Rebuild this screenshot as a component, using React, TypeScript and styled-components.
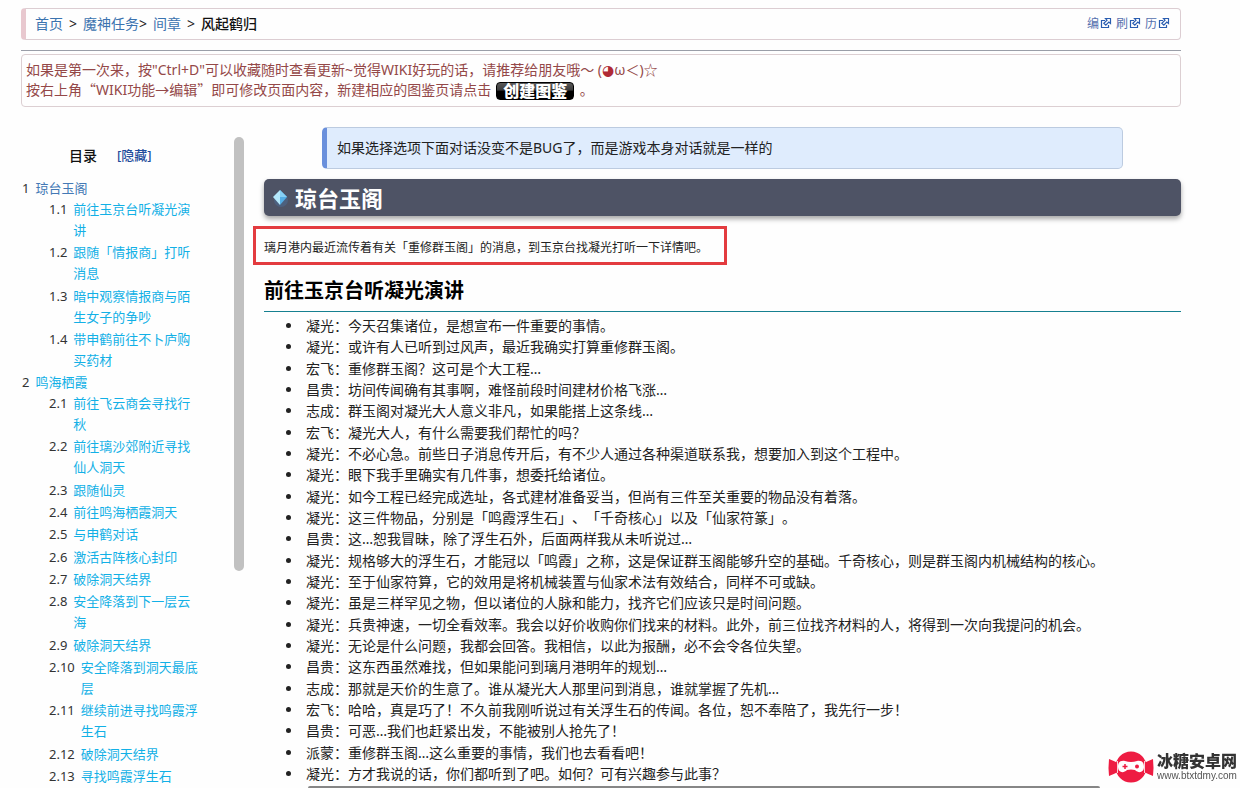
import React from "react";
import styled, { createGlobalStyle, css } from "styled-components";

const sans = `"Noto Sans", "Noto Sans CJK SC", sans-serif`;

const GlobalStyle = createGlobalStyle`
  *, *::before, *::after { box-sizing: border-box; }
  body {
    margin: 0;
    background: #fefefe;
    color: #222;
    font-family: ${sans};
    font-size: 14px;
    line-height: 21px;
    text-spacing-trim: space-all;
  }
  a { color: #3b73af; text-decoration: none; }
`;

const Page = styled.div`
  padding: 8px 59px 0 21px;
`;

const Breadcrumb = styled.nav`
  display: flex;
  align-items: center;
  justify-content: space-between;
  height: 32px;
  padding: 0 10px 2px 9px;
  border: 1px solid #dccdd2;
  border-left: 5px solid #e8c8cf;
  border-radius: 4px;
`;

const Trail = styled.div`
  display: flex;
  gap: 6px;
`;

const Current = styled.strong`
  color: #111;
  font-weight: 500;
`;

const Actions = styled.div`
  display: flex;
  gap: 4px;
  font-size: 12px;
  a {
    display: flex;
    align-items: center;
    gap: 1px;
    color: #5570ae;
  }
`;

const Rule = styled.hr`
  margin: 10px 0 3px;
  border: 0;
  border-top: 1px solid #9a9ea8;
`;

const Notice = styled.section`
  padding: 5px 4px 6px;
  border: 1px solid #dccfd2;
  border-radius: 4px;
  color: #944848;
  line-height: 20px;
  p { margin: 0; }
`;

const Cjk = styled.span`
  font-family: "Noto Sans CJK SC", sans-serif;
  line-height: 1;
`;

const Face = styled.span`
  font-family: "DejaVu Sans", sans-serif;
  line-height: 1;
  color: #b02a35;
`;

const CreateButton = styled.button`
  height: 18px;
  margin: 2px 2px 0 5px;
  padding: 0 6px 2px;
  border: 1px solid #000;
  border-radius: 4px;
  background: linear-gradient(#5a5a5a 0, #3a3a3a 45%, #000 50%, #000 100%);
  color: #fff;
  font-family: "Noto Sans CJK SC", sans-serif;
  font-size: 16px;
  font-weight: 900;
  line-height: 14px;
  vertical-align: top;
`;

const Columns = styled.div`
  display: flex;
  gap: 20px;
  padding-top: 20px;
`;

const Sidebar = styled.aside`
  display: flex;
  flex: 0 0 223px;
  justify-content: space-between;
  padding-top: 10px;
`;

const Toc = styled.nav`
  flex: 1;
  padding-top: 8px;
  font-size: 13px;
`;

const TocHeader = styled.div`
  display: flex;
  gap: 20px;
  padding-left: 48px;
  margin-bottom: 12px;
  h2 {
    margin: 0;
    color: #111;
    font-size: 14px;
    font-weight: 500;
    line-height: 21px;
  }
  button {
    padding: 0;
    border: 0;
    background: none;
    color: #1f4d9c;
    font: inherit;
    font-weight: 500;
  }
`;

const TocList = styled.ol<{ $nested?: boolean }>`
  margin: 0;
  padding: 0 0 0 ${(p) => (p.$nested ? 27 : 1)}px;
  list-style: none;
  ${(p) =>
    p.$nested &&
    css`
      > li { padding-bottom: 1px; }
      > li:nth-child(3n) { padding-top: 1px; }
    `}
`;

const TocEntry = styled.div<{ $tone: string }>`
  display: flex;
  gap: 6px;
  color: #333;
  a {
    max-width: 120px;
    color: ${(p) => p.$tone};
  }
`;

const Thumb = styled.div`
  width: 10px;
  height: 434px;
  border-radius: 5px;
  background: #c1c1c1;
`;

const Content = styled.main`
  flex: 1;
  min-width: 0;
`;

const Callout = styled.aside`
  max-width: 801px;
  margin: 0 auto 10px;
  padding: 9px 10px 10px;
  border: 1px solid #bccbe0;
  border-left: 5px solid #6a90dc;
  border-radius: 5px;
  background: #dfecfd;
`;

const Title = styled.h1`
  display: flex;
  align-items: center;
  gap: 6px;
  height: 37px;
  margin: 0 0 10px;
  padding: 0 8px;
  border-radius: 5px;
  background: #4e5365;
  box-shadow: 0 3px 5px rgba(0, 0, 0, 0.35);
  color: #fff;
  font-size: 22px;
  line-height: 32px;
`;

const Highlight = styled.p`
  width: 474px;
  max-width: 100%;
  margin: 0 0 10px -11px;
  padding: 11px 8px 7px;
  border: 3px solid #e33b3f;
  font-size: 12px;
  line-height: 15px;
`;

const Subtitle = styled.h2`
  margin: 0 0 3px;
  padding-bottom: 5px;
  border-bottom: 1px solid #168090;
  color: #000;
  font-size: 20px;
  line-height: 31px;
`;

const Dialogue = styled.ul`
  margin: 0;
  padding: 0 0 0 22px;
  list-style: none;
  li {
    display: flex;
    align-items: center;
    gap: 15px;
  }
  li::before {
    flex: 0 0 5px;
    height: 5px;
    border-radius: 50%;
    background: #222;
    content: "";
  }
  li:nth-child(3n) { padding-top: 1px; }
`;

const BottomBar = styled.div`
  height: 2px;
  margin: 2px 81px 0 44px;
  border-radius: 2px 2px 0 0;
  background: #868686;
`;

const Watermark = styled.div`
  position: fixed;
  right: 3px;
  bottom: 5px;
  display: flex;
  align-items: center;
  gap: 3px;
`;

const WatermarkText = styled.div`
  display: flex;
  flex-direction: column;
  color: #333;
  strong {
    font-size: 16px;
    font-weight: 900;
    line-height: 18px;
  }
  span {
    color: #555;
    font-family: "Liberation Sans", sans-serif;
    font-size: 10px;
    line-height: 12px;
  }
`;

const ExternalIcon = () => (
  <svg width="12" height="12" viewBox="0 0 12 12" fill="none" stroke="#2a5db0" aria-hidden="true">
    <path d="M5 3.5H1.5v7h7V8" strokeWidth="1.200" />
    <path d="M5.500 1.5h5v5L8.800 5 5.800 8.200 3.800 6.200 7 3.200z" fill="#fff" strokeWidth="1.200" />
  </svg>
);

const Gem = () => (
  <svg width="17" height="20" viewBox="0 0 17 20" aria-hidden="true">
    <ellipse cx="9" cy="12" rx="7" ry="7" fill="#4a7fb8" opacity=".3" />
    <path d="M8 2 1 9l7 8z" fill="#b4e8fb" />
    <path d="m8 2 7 7-7 8z" fill="#54aee6" />
    <path d="m8 2 7 7H8z" fill="#86d0f5" />
  </svg>
);

const Candy = () => (
  <svg width="46" height="32" viewBox="0 0 46 32" aria-hidden="true">
    <path d="M1 8q5 2 9 4v9q-4 2-9 4-1-8 0-17zM45 8q-5 2-9 4v9q4 2 9 4 1-8 0-17z" fill="#ee1c42" />
    <circle cx="23" cy="16" r="15.500" fill="#ee1c42" />
    <path d="M9.500 10v12M36.500 10v12" stroke="#fff" strokeWidth=".800" />
    <path d="M17 10q6 2 12 0c6-1 7 3 7 6 0 5-5 7-9 3q-4-1-8 0c-4 4-9 2-9-3 0-3 1-7 7-6z" fill="#fff" />
    <path d="M14.500 15.500h5M17 13v5" stroke="#ee1c42" strokeWidth="1.500" />
    <circle cx="29" cy="15.500" r="2" fill="#ee1c42" />
  </svg>
);

const toc = [
  {
    title: "琼台玉阁",
    tone: "#4479b5",
    items: ["前往玉京台听凝光演讲", "跟随「情报商」打听消息", "暗中观察情报商与陌生女子的争吵", "带申鹤前往不卜庐购买药材"],
  },
  {
    title: "鸣海栖霞",
    tone: "#12b0e6",
    items: [
      "前往飞云商会寻找行秋",
      "前往璃沙郊附近寻找仙人洞天",
      "跟随仙灵",
      "前往鸣海栖霞洞天",
      "与申鹤对话",
      "激活古阵核心封印",
      "破除洞天结界",
      "安全降落到下一层云海",
      "破除洞天结界",
      "安全降落到洞天最底层",
      "继续前进寻找鸣霞浮生石",
      "破除洞天结界",
      "寻找鸣霞浮生石",
    ],
  },
];

const lines = [
  "凝光：今天召集诸位，是想宣布一件重要的事情。",
  "凝光：或许有人已听到过风声，最近我确实打算重修群玉阁。",
  "宏飞：重修群玉阁？这可是个大工程…",
  "昌贵：坊间传闻确有其事啊，难怪前段时间建材价格飞涨…",
  "志成：群玉阁对凝光大人意义非凡，如果能搭上这条线…",
  "宏飞：凝光大人，有什么需要我们帮忙的吗？",
  "凝光：不必心急。前些日子消息传开后，有不少人通过各种渠道联系我，想要加入到这个工程中。",
  "凝光：眼下我手里确实有几件事，想委托给诸位。",
  "凝光：如今工程已经完成选址，各式建材准备妥当，但尚有三件至关重要的物品没有着落。",
  "凝光：这三件物品，分别是「鸣霞浮生石」、「千奇核心」以及「仙家符篆」。",
  "昌贵：这…恕我冒昧，除了浮生石外，后面两样我从未听说过…",
  "凝光：规格够大的浮生石，才能冠以「鸣霞」之称，这是保证群玉阁能够升空的基础。千奇核心，则是群玉阁内机械结构的核心。",
  "凝光：至于仙家符算，它的效用是将机械装置与仙家术法有效结合，同样不可或缺。",
  "凝光：虽是三样罕见之物，但以诸位的人脉和能力，找齐它们应该只是时间问题。",
  "凝光：兵贵神速，一切全看效率。我会以好价收购你们找来的材料。此外，前三位找齐材料的人，将得到一次向我提问的机会。",
  "凝光：无论是什么问题，我都会回答。我相信，以此为报酬，必不会令各位失望。",
  "昌贵：这东西虽然难找，但如果能问到璃月港明年的规划…",
  "志成：那就是天价的生意了。谁从凝光大人那里问到消息，谁就掌握了先机…",
  "宏飞：哈哈，真是巧了！不久前我刚听说过有关浮生石的传闻。各位，恕不奉陪了，我先行一步！",
  "昌贵：可恶…我们也赶紧出发，不能被别人抢先了！",
  "派蒙：重修群玉阁…这么重要的事情，我们也去看看吧！",
  "凝光：方才我说的话，你们都听到了吧。如何？可有兴趣参与此事？",
];

export default function App() {
  return (
    <>
      <GlobalStyle />
      <Page>
        <Breadcrumb>
          <Trail>
            <a href="#home">首页</a>
            <span>&gt;</span>
            <span>
              <a href="#quests">魔神任务</a>&gt;
            </span>
            <a href="#interlude">间章</a>
            <span>&gt;</span>
            <Current>风起鹤归</Current>
          </Trail>
          <Actions>
            {["编", "刷", "历"].map((label) => (
              <a href="#action" key={label}>
                {label}
                <ExternalIcon />
              </a>
            ))}
          </Actions>
        </Breadcrumb>
        <Rule />
        <Notice>
          <p>
            如果是第一次来，按"Ctrl+D"可以收藏随时查看更新~觉得WIKI好玩的话，请推荐给朋友哦～ (<Face>◕</Face>ω＜)☆
          </p>
          <p>
            按右上角<Cjk>“</Cjk>WIKI功能→编辑<Cjk>”</Cjk>即可修改页面内容，新建相应的图鉴页请点击
            <CreateButton type="button">创建图鉴</CreateButton> 。
          </p>
        </Notice>
        <Columns>
          <Sidebar>
            <Toc>
              <TocHeader>
                <h2>目录</h2>
                <button type="button">[隐藏]</button>
              </TocHeader>
              <TocList>
                {toc.map((section, i) => (
                  <li key={section.title}>
                    <TocEntry $tone={section.tone}>
                      <span>{i + 1}</span>
                      <a href={`#s${i + 1}`}>{section.title}</a>
                    </TocEntry>
                    <TocList $nested>
                      {section.items.map((item, j) => (
                        <li key={j}>
                          <TocEntry $tone="#12b0e6">
                            <span>{`${i + 1}.${j + 1}`}</span>
                            <a href={`#s${i + 1}-${j + 1}`}>{item}</a>
                          </TocEntry>
                        </li>
                      ))}
                    </TocList>
                  </li>
                ))}
              </TocList>
            </Toc>
            <Thumb />
          </Sidebar>
          <Content>
            <Callout>如果选择选项下面对话没变不是BUG了，而是游戏本身对话就是一样的</Callout>
            <Title id="s1">
              <Gem />
              琼台玉阁
            </Title>
            <Highlight>璃月港内最近流传着有关「重修群玉阁」的消息，到玉京台找凝光打听一下详情吧。</Highlight>
            <Subtitle id="s1-1">前往玉京台听凝光演讲</Subtitle>
            <Dialogue>
              {lines.map((line) => (
                <li key={line}>{line}</li>
              ))}
            </Dialogue>
            <BottomBar />
          </Content>
        </Columns>
      </Page>
      <Watermark>
        <Candy />
        <WatermarkText>
          <strong>冰糖安卓网</strong>
          <span>www.btxtdmy.com</span>
        </WatermarkText>
      </Watermark>
    </>
  );
}
